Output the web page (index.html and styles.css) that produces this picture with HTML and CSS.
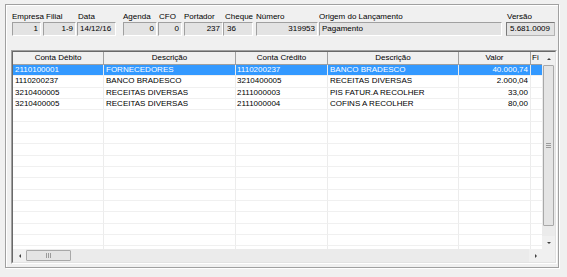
FILE: index.html
```html
<!DOCTYPE html>
<html>
<head>
<meta charset="utf-8">
<link rel="stylesheet" href="styles.css">
</head>
<body>
<div class="frame">
  <div class="fields">
    <div class="fld f-emp"><span class="lbl">Empresa</span><span class="box r">1</span></div>
    <div class="fld f-fil"><span class="lbl l3">Filial</span><span class="box r">1-9</span></div>
    <div class="fld f-dat"><span class="lbl l1">Data</span><span class="box">14/12/16</span></div>
    <div class="fld f-age"><span class="lbl">Agenda</span><span class="box r">0</span></div>
    <div class="fld f-cfo"><span class="lbl l1">CFO</span><span class="box r">0</span></div>
    <div class="fld f-por"><span class="lbl">Portador</span><span class="box r">237</span></div>
    <div class="fld f-che"><span class="lbl l2">Cheque</span><span class="box b3">36</span></div>
    <div class="fld f-num"><span class="lbl">Número</span><span class="box r">319953</span></div>
    <div class="fld f-ori"><span class="lbl">Origem do Lançamento</span><span class="box">Pagamento</span></div>
    <div class="fld f-ver"><span class="lbl l1">Versão</span><span class="box r ver">5.681.0009</span></div>
  </div>
  <div class="grid-outer">
    <div class="grid-inner">
      <div class="grid-main">
        <div class="cols">
          <div class="thead">
            <div class="th c1">Conta Débito</div>
            <div class="th c2">Descrição</div>
            <div class="th c3">Conta Crédito</div>
            <div class="th c4">Descrição</div>
            <div class="th c5">Valor</div>
            <div class="th c6">Fi</div>
          </div>
          <div class="tbody">
            <div class="tr sel"><div class="td c1">2110100001</div><div class="td c2">FORNECEDORES</div><div class="td c3">1110200237</div><div class="td c4">BANCO BRADESCO</div><div class="td c5">40.000,74</div><div class="td c6"></div></div>
            <div class="tr"><div class="td c1">1110200237</div><div class="td c2">BANCO BRADESCO</div><div class="td c3">3210400005</div><div class="td c4">RECEITAS DIVERSAS</div><div class="td c5">2.000,04</div><div class="td c6"></div></div>
            <div class="tr"><div class="td c1">3210400005</div><div class="td c2">RECEITAS DIVERSAS</div><div class="td c3">2111000003</div><div class="td c4">PIS FATUR.A RECOLHER</div><div class="td c5">33,00</div><div class="td c6"></div></div>
            <div class="tr"><div class="td c1">3210400005</div><div class="td c2">RECEITAS DIVERSAS</div><div class="td c3">2111000004</div><div class="td c4">COFINS A RECOLHER</div><div class="td c5">80,00</div><div class="td c6"></div></div>
            <div class="tr"><div class="td c1"></div><div class="td c2"></div><div class="td c3"></div><div class="td c4"></div><div class="td c5"></div><div class="td c6"></div></div>
            <div class="tr"><div class="td c1"></div><div class="td c2"></div><div class="td c3"></div><div class="td c4"></div><div class="td c5"></div><div class="td c6"></div></div>
            <div class="tr"><div class="td c1"></div><div class="td c2"></div><div class="td c3"></div><div class="td c4"></div><div class="td c5"></div><div class="td c6"></div></div>
            <div class="tr"><div class="td c1"></div><div class="td c2"></div><div class="td c3"></div><div class="td c4"></div><div class="td c5"></div><div class="td c6"></div></div>
            <div class="tr"><div class="td c1"></div><div class="td c2"></div><div class="td c3"></div><div class="td c4"></div><div class="td c5"></div><div class="td c6"></div></div>
            <div class="tr"><div class="td c1"></div><div class="td c2"></div><div class="td c3"></div><div class="td c4"></div><div class="td c5"></div><div class="td c6"></div></div>
            <div class="tr"><div class="td c1"></div><div class="td c2"></div><div class="td c3"></div><div class="td c4"></div><div class="td c5"></div><div class="td c6"></div></div>
            <div class="tr"><div class="td c1"></div><div class="td c2"></div><div class="td c3"></div><div class="td c4"></div><div class="td c5"></div><div class="td c6"></div></div>
            <div class="tr"><div class="td c1"></div><div class="td c2"></div><div class="td c3"></div><div class="td c4"></div><div class="td c5"></div><div class="td c6"></div></div>
            <div class="tr"><div class="td c1"></div><div class="td c2"></div><div class="td c3"></div><div class="td c4"></div><div class="td c5"></div><div class="td c6"></div></div>
            <div class="tr"><div class="td c1"></div><div class="td c2"></div><div class="td c3"></div><div class="td c4"></div><div class="td c5"></div><div class="td c6"></div></div>
            <div class="tr"><div class="td c1"></div><div class="td c2"></div><div class="td c3"></div><div class="td c4"></div><div class="td c5"></div><div class="td c6"></div></div>
            <div class="tr"><div class="td c1"></div><div class="td c2"></div><div class="td c3"></div><div class="td c4"></div><div class="td c5"></div><div class="td c6"></div></div>
          </div>
        </div>
        <div class="vscroll">
          <div class="sbtn"><span class="tri up"></span></div>
          <div class="vtrack"><div class="vthumb"></div></div>
          <div class="sbtn"><span class="tri down"></span></div>
        </div>
      </div>
      <div class="hscroll">
        <div class="sbtn"><span class="tri left"></span></div>
        <div class="htrack"><div class="hthumb"></div></div>
        <div class="sbtn"><span class="tri right"></span></div>
        <div class="corner"></div>
      </div>
    </div>
  </div>
</div>
</body>
</html>
```
FILE: styles.css
```css
html, body {
  margin: 0;
  padding: 0;
}
body {
  background: #f0f0f0;
  font-family: "Liberation Sans", Arial, sans-serif;
  font-size: 8px;
  color: #000;
  width: 567px;
  height: 277px;
  overflow: hidden;
}
.frame {
  box-sizing: border-box;
  margin: 4px 0 0 5px;
  width: 554px;
  height: 264px;
  border: 1px solid #a0a0a0;
  box-shadow: inset 1px 1px 0 #fff, 1px 1px 0 #fff;
  padding: 6px 0 0 5px;
}
.fields {
  display: flex;
  margin-left: 1px;
  height: 25px;
}
.fld {
  display: flex;
  flex-direction: column;
  flex: none;
}
.lbl {
  height: 11px;
  line-height: 11px;
  white-space: nowrap;
}
.l1 { padding-left: 1px; }
.l2 { padding-left: 2px; }
.l3 { padding-left: 3px; }
.box {
  box-sizing: border-box;
  height: 14px;
  line-height: 12px;
  border: 1px solid;
  border-color: #a0a0a0 #fff #fff #a0a0a0;
  background: #e3e3e3;
  padding: 0 2px;
  white-space: nowrap;
  overflow: hidden;
}
.r { text-align: right; }
.b3 { padding-left: 3px; }
.ver {
  border-color: #7a7a7a #b4b4b4 #b4b4b4 #7a7a7a;
  padding-right: 4px;
}
.f-emp { width: 29px; }
.f-fil { width: 33px; margin-left: 2px; }
.f-dat { width: 39px; margin-left: 1px; }
.f-age { width: 34px; margin-left: 7px; }
.f-cfo { width: 24px; margin-left: 1px; }
.f-por { width: 39px; margin-left: 2px; }
.f-che { width: 30px; }
.f-num { width: 62px; margin-left: 3px; }
.f-ori { width: 183px; margin-left: 1px; }
.f-ver { width: 49px; margin-left: 4px; }

.grid-outer {
  box-sizing: border-box;
  width: 546px;
  height: 214px;
  margin-top: 14px;
  border: 1px solid;
  border-color: #a0a0a0 #fff #fff #a0a0a0;
}
.grid-inner {
  box-sizing: border-box;
  height: 100%;
  border: 1px solid;
  border-color: #696969 #e3e3e3 #e3e3e3 #696969;
  background: #fff;
  display: flex;
  flex-direction: column;
}
.grid-main {
  display: flex;
  height: 197px;
  flex: none;
}
.cols {
  width: 529px;
  overflow: hidden;
  flex: none;
}
.thead {
  display: flex;
  box-sizing: border-box;
  height: 13px;
  border-bottom: 1px solid #a0a0a0;
  background: #f0f0f0;
}
.th {
  box-sizing: border-box;
  border-right: 1px solid #a0a0a0;
  text-align: center;
  line-height: 12px;
  white-space: nowrap;
  overflow: hidden;
  flex: none;
}
.th.c6 {
  text-align: left;
  padding-left: 1px;
  border-right: none;
}
.c1 { width: 91px; }
.c2 { width: 132px; }
.c3 { width: 92px; }
.c4 { width: 131px; }
.c5 { width: 72px; }
.c6 { width: 11px; }
.tbody {
  height: 184px;
  overflow: hidden;
}
.tr {
  display: flex;
  height: 11.333px;
}
.td {
  box-sizing: border-box;
  flex: none;
  height: 100%;
  border-right: 1px solid #ececec;
  border-bottom: 1px solid #f0f0f0;
  padding: 0 2px;
  line-height: 10.333px;
  white-space: nowrap;
  overflow: hidden;
}
.td.c3 { padding-left: 1px; }
.td.c5 { text-align: right; }
.td.c6 { border-right: none; }
.tr.sel .td {
  background: #3399ff;
  color: #fff;
}

.vscroll {
  width: 13px;
  flex: none;
  display: flex;
  flex-direction: column;
  background: #ebebeb;
}
.sbtn {
  width: 13px;
  height: 13px;
  flex: none;
  display: flex;
  align-items: center;
  justify-content: center;
  background: #f0f0f0;
}
.vtrack {
  flex: 1;
  display: flex;
  flex-direction: column;
}
.vthumb {
  box-sizing: border-box;
  margin: 0 1px;
  height: 161px;
  border: 1px solid #a8a8a8;
  border-radius: 1px;
  background: #e4e4e4;
  display: flex;
  align-items: center;
  justify-content: center;
}
.vthumb::after {
  content: "";
  width: 5px;
  height: 5px;
  background: repeating-linear-gradient(to bottom, #9a9a9a 0 1px, transparent 1px 2px);
}
.hscroll {
  display: flex;
  height: 13px;
  flex: none;
  background: #ebebeb;
}
.htrack {
  flex: 1;
  display: flex;
  align-items: center;
}
.hthumb {
  box-sizing: border-box;
  width: 45px;
  height: 11px;
  border: 1px solid #a8a8a8;
  border-radius: 1px;
  background: #e4e4e4;
  display: flex;
  align-items: center;
  justify-content: center;
}
.hthumb::after {
  content: "";
  width: 5px;
  height: 5px;
  background: repeating-linear-gradient(to right, #9a9a9a 0 1px, transparent 1px 2px);
}
.corner {
  width: 13px;
  flex: none;
  background: #f0f0f0;
}
.tri {
  width: 0;
  height: 0;
  border: 0 solid transparent;
}
.tri.up {
  border-width: 0 2px 2px 2px;
  border-bottom-color: #404040;
}
.tri.down {
  border-width: 2px 2px 0 2px;
  border-top-color: #404040;
}
.tri.left {
  border-width: 2px 2px 2px 0;
  border-right-color: #404040;
}
.tri.right {
  border-width: 2px 0 2px 2px;
  border-left-color: #404040;
}
```
